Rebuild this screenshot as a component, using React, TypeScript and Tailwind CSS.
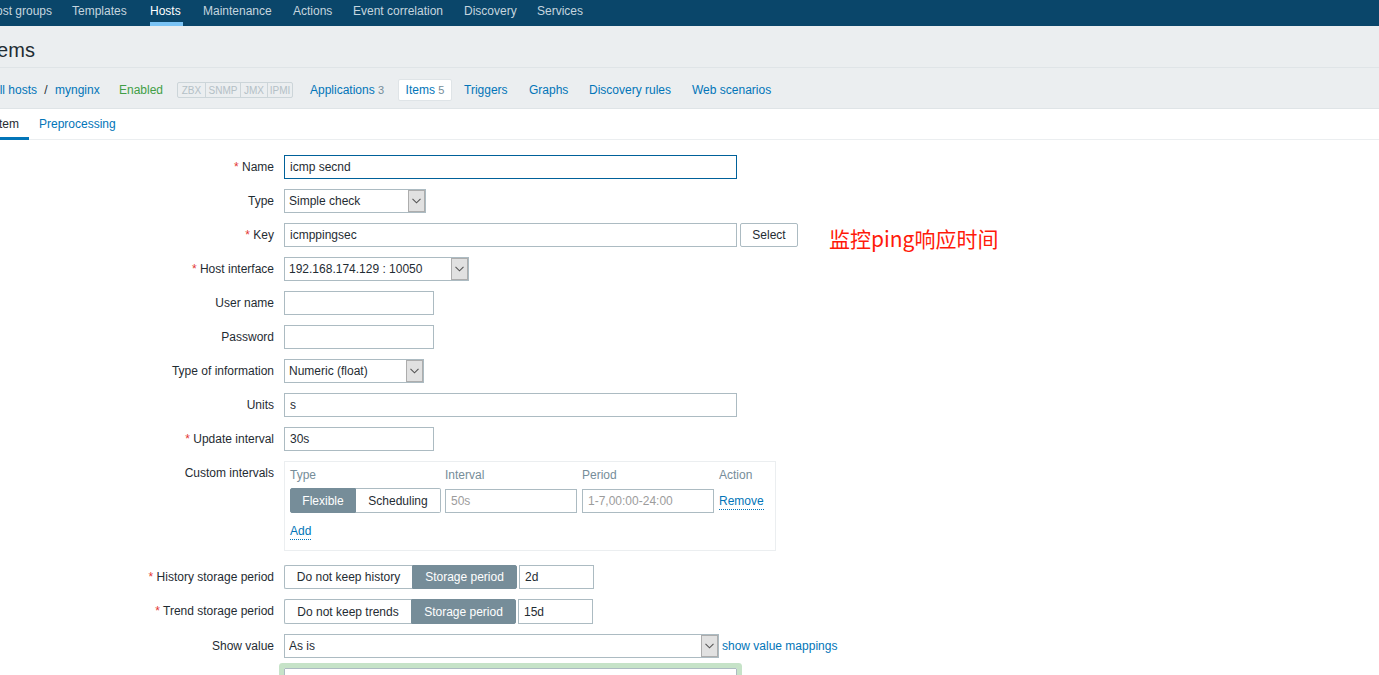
import { useState, type ReactNode } from 'react';
import clsx from 'clsx';

const inputBase =
  'border px-[5px] text-xs text-[#1f2c33] bg-white outline-none placeholder:text-[#9c9c9c]';

const navItems = [
  { label: 'Host groups', width: 'w-[66px]' },
  { label: 'Templates', width: 'w-[58px]' },
  { label: 'Hosts', width: 'w-[33px]', active: true },
  { label: 'Maintenance', width: 'w-[70px]' },
  { label: 'Actions', width: 'w-10' },
  { label: 'Event correlation', width: 'w-[91px]' },
  { label: 'Discovery', width: 'w-[53px]' },
  { label: 'Services', width: 'w-12' },
];

const statuses = [
  { label: 'ZBX', width: 'w-7' },
  { label: 'SNMP', width: 'w-[35px]' },
  { label: 'JMX', width: 'w-[27px]' },
  { label: 'IPMI', width: 'w-6' },
];

const sections = [
  { label: 'Triggers', width: 'w-[46px]' },
  { label: 'Graphs', width: 'w-[41px]' },
  { label: 'Discovery rules', width: 'w-[84px]' },
  { label: 'Web scenarios', width: 'w-[84px]' },
];

function Row({
  label,
  id,
  required,
  children,
}: {
  label: string;
  id?: string;
  required?: boolean;
  children: ReactNode;
}) {
  return (
    <div className="grid grid-cols-[274px_1fr] gap-x-[10px]">
      <label htmlFor={id} className="text-right leading-6">
        {required && <span className="text-[#e33734]">* </span>}
        {label}
      </label>
      <div className="flex items-start">{children}</div>
    </div>
  );
}

function TextInput({
  id,
  value = '',
  width,
  height = 'h-6',
  focused,
}: {
  id: string;
  value?: string;
  width: string;
  height?: string;
  focused?: boolean;
}) {
  return (
    <input
      id={id}
      type="text"
      defaultValue={value}
      className={clsx(inputBase, width, height, focused ? 'border-[#00619a]' : 'border-[#acbbc2]')}
    />
  );
}

function Select({ id, value, width }: { id: string; value: string; width: string }) {
  return (
    <div className={clsx('relative', width)}>
      <select
        id={id}
        className="block h-6 w-full appearance-none border border-[#acbbc2] bg-white pl-1 pr-5 text-xs text-[#1f2c33] outline-none"
      >
        <option>{value}</option>
      </select>
      <span className="pointer-events-none absolute inset-y-px right-px flex w-[17px] items-center justify-center border border-[#adadad] bg-[#e1e1e1]">
        <svg width="9" height="6" viewBox="0 0 9 6" fill="none" stroke="#555" strokeWidth="1.1">
          <path d="M0.5 0.8 L4.5 4.8 L8.5 0.8" />
        </svg>
      </span>
    </div>
  );
}

function Toggle({
  options,
  initial,
  height = 'h-6',
}: {
  options: { label: string; width: string }[];
  initial: number;
  height?: string;
}) {
  const [selected, setSelected] = useState(initial);
  return (
    <div className="flex">
      {options.map((o, i) => (
        <button
          key={o.label}
          type="button"
          aria-pressed={selected === i}
          onClick={() => setSelected(i)}
          className={clsx(
            'whitespace-nowrap border text-center first:rounded-l-xs last:rounded-r-xs',
            o.width,
            height,
            selected === i
              ? 'border-[#768d99] bg-[#768d99] text-white'
              : 'border-[#acbbc2] bg-white first:border-r-0 last:border-l-0',
          )}
        >
          {o.label}
        </button>
      ))}
    </div>
  );
}

export default function App() {
  return (
    <div className="h-screen overflow-hidden bg-white font-['Liberation_Sans',Arial,sans-serif] text-xs text-[#1f2c33]">
      <nav className="h-[26px] bg-[#0a466a]">
        <ul className="-ml-[14px] flex gap-5">
          {navItems.map((n) => (
            <li key={n.label} className={clsx('first:text-right', n.width)}>
              <a
                href="#"
                className={clsx(
                  'block h-[26px] whitespace-nowrap border-b-4 leading-[22px]',
                  n.active ? 'border-[#7ac3f5] text-white' : 'border-transparent text-[#c5d5df]',
                )}
              >
                {n.label}
              </a>
            </li>
          ))}
        </ul>
      </nav>

      <header className="bg-[#ebeef0]">
        <div className="flex h-[42px] items-center border-b border-[#dfe4e7] pt-[7px]">
          <h1 className="-ml-[14px] text-xl">Items</h1>
        </div>
        <div className="-ml-3 flex h-10 items-center pt-[3px] text-[#0275b8]">
          <a href="#" className="w-[49px] whitespace-nowrap text-right">All hosts</a>
          <span className="w-[18px] text-center text-[#1f2c33]">/</span>
          <a href="#" className="w-16">mynginx</a>
          <span className="w-[58px] text-[#429e47]">Enabled</span>
          <span className="flex h-4 divide-x divide-[#ccd5d9] rounded-xs border border-[#ccd5d9] text-[10px] leading-4 text-[#b4c0c6]">
            {statuses.map((s) => (
              <span key={s.label} className={clsx('text-center', s.width)}>{s.label}</span>
            ))}
          </span>
          <a href="#" className="ml-[17px] w-[88px] whitespace-nowrap">
            Applications <span className="text-[11px] text-[#768d99]">3</span>
          </a>
          <a
            href="#"
            className="h-[22px] w-[54px] whitespace-nowrap rounded-xs border border-[#dfe4e7] bg-white text-center leading-5"
          >
            Items <span className="text-[11px] text-[#768d99]">5</span>
          </a>
          <div className="ml-3 flex gap-[19px]">
            {sections.map((s) => (
              <a key={s.label} href="#" className={clsx('whitespace-nowrap', s.width)}>{s.label}</a>
            ))}
          </div>
        </div>
      </header>

      <div className="flex h-8 border-y border-t-[#dfe4e7] border-b-[#ebeef0]">
        <a href="#" className="-ml-[15px] box-content h-7 w-[34px] whitespace-nowrap border-b-3 border-[#0275b8] pr-[10px] text-right leading-[30px]">
          Item
        </a>
        <a href="#" className="ml-[10px] leading-[30px] text-[#0275b8]">Preprocessing</a>
      </div>

      <form className="flex flex-col gap-[10px] pt-[15px]" onSubmit={(e) => e.preventDefault()}>
        <Row label="Name" id="name" required>
          <TextInput id="name" value="icmp secnd" width="w-[453px]" focused />
        </Row>
        <Row label="Type" id="type">
          <Select id="type" value="Simple check" width="w-[142px]" />
        </Row>
        <Row label="Key" id="key" required>
          <div className="relative flex gap-[3px]">
            <TextInput id="key" value="icmppingsec" width="w-[453px]" />
            <button type="button" className="h-6 w-[58px] rounded-xs border border-[#acbbc2]">
              Select
            </button>
            <p className="absolute left-full top-0 ml-[31px] whitespace-nowrap font-['Noto_Sans_CJK_SC',sans-serif] text-[21px] leading-[30px] text-[#ff1a0a]">
              监控ping响应时间
            </p>
          </div>
        </Row>
        <Row label="Host interface" id="interface" required>
          <Select id="interface" value="192.168.174.129 : 10050" width="w-[185px]" />
        </Row>
        <Row label="User name" id="username">
          <TextInput id="username" width="w-[150px]" />
        </Row>
        <Row label="Password" id="password">
          <TextInput id="password" width="w-[150px]" />
        </Row>
        <Row label="Type of information" id="value_type">
          <Select id="value_type" value="Numeric (float)" width="w-[140px]" />
        </Row>
        <Row label="Units" id="units">
          <TextInput id="units" value="s" width="w-[453px]" />
        </Row>
        <Row label="Update interval" id="delay" required>
          <TextInput id="delay" value="30s" width="w-[150px]" />
        </Row>
        <Row label="Custom intervals">
          <div className="mb-1 h-[90px] w-[492px] border border-[#ebeef0] pl-[5px]">
            <table className="w-full table-fixed border-collapse text-left">
              <thead>
                <tr className="h-[26px] text-[#768d99]">
                  <th className="w-[155px] p-0 font-normal">Type</th>
                  <th className="w-[137px] p-0 font-normal">Interval</th>
                  <th className="w-[137px] p-0 font-normal">Period</th>
                  <th className="p-0 font-normal">Action</th>
                </tr>
              </thead>
              <tbody>
                <tr className="h-[25px]">
                  <td className="p-0">
                    <Toggle
                      height="h-[25px]"
                      initial={0}
                      options={[
                        { label: 'Flexible', width: 'w-[66px]' },
                        { label: 'Scheduling', width: 'w-[85px]' },
                      ]}
                    />
                  </td>
                  <td className="p-0 align-bottom">
                    <input aria-label="Interval" placeholder="50s" className={clsx(inputBase, 'block h-6 w-[132px] border-[#acbbc2]')} />
                  </td>
                  <td className="p-0 align-bottom">
                    <input aria-label="Period" placeholder="1-7,00:00-24:00" className={clsx(inputBase, 'block h-6 w-[132px] border-[#acbbc2]')} />
                  </td>
                  <td className="p-0 pt-px">
                    <button type="button" className="block border-b border-dotted border-[#0275b8] text-[#0275b8]">Remove</button>
                  </td>
                </tr>
                <tr className="h-9">
                  <td className="p-0" colSpan={4}>
                    <button type="button" className="block border-b border-dotted border-[#0275b8] text-[#0275b8]">Add</button>
                  </td>
                </tr>
              </tbody>
            </table>
          </div>
        </Row>
        <Row label="History storage period" id="history" required>
          <div className="flex gap-[2px]">
            <Toggle
              initial={1}
              options={[
                { label: 'Do not keep history', width: 'w-32' },
                { label: 'Storage period', width: 'w-[105px]' },
              ]}
            />
            <TextInput id="history" value="2d" width="w-[75px]" />
          </div>
        </Row>
        <Row label="Trend storage period" id="trends" required>
          <div className="flex gap-[2px]">
            <Toggle
              height="h-[25px]"
              initial={1}
              options={[
                { label: 'Do not keep trends', width: 'w-[127px]' },
                { label: 'Storage period', width: 'w-[105px]' },
              ]}
            />
            <TextInput id="trends" value="15d" width="w-[75px]" height="h-[25px]" />
          </div>
        </Row>
        <Row label="Show value" id="valuemap">
          <Select id="valuemap" value="As is" width="w-[435px]" />
          <a href="#" className="ml-[3px] leading-6 text-[#0275b8]">show value mappings</a>
        </Row>
        <Row label="" id="description">
          <textarea
            id="description"
            aria-label="Description"
            className="h-24 w-[453px] resize-none rounded-[1px] border border-[#acbbc2] ring-5 ring-[#c6e3c8] outline-none"
          />
        </Row>
      </form>
    </div>
  );
}
